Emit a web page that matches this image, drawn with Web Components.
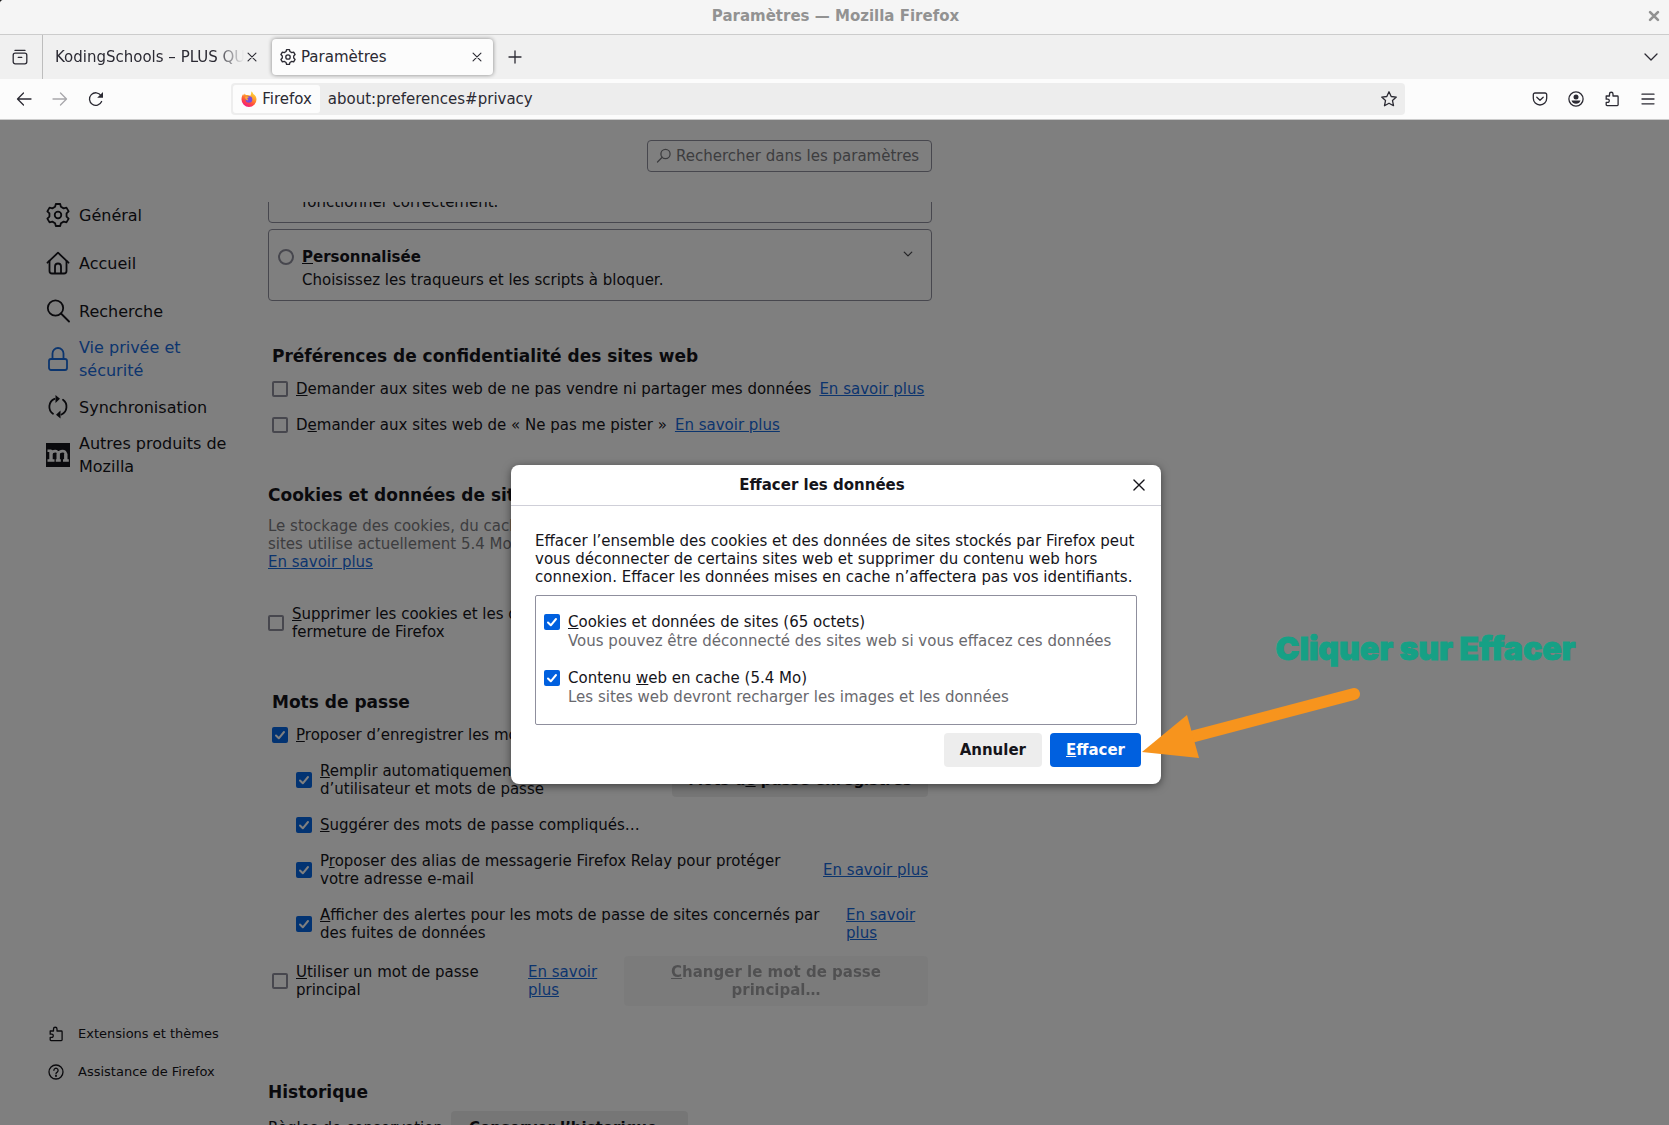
<!DOCTYPE html>
<html lang="fr">
<head>
<meta charset="utf-8">
<title>Paramètres — Mozilla Firefox</title>
<style>
  html, body { margin: 0; height: 100%; }
  html { background: #1c1c1c; }
  body {
    font: 15px/18px "DejaVu Sans", sans-serif;
    color: #15141a;
    overflow: hidden;
  }
</style>
</head>
<body>
<browser-window></browser-window>

<script>
const ICONS = {
  gear: '<path d="M9.800 1h4.400l.7 2.800 2.750 1.600 2.800-.8 2.200 3.800-2.100 2v3.200l2.100 2-2.200 3.800-2.800-.8-2.750 1.600-.7 2.800H9.800l-.7-2.800-2.750-1.600-2.800.8-2.200-3.800 2.100-2v-3.200l-2.100-2 2.200-3.800 2.800.8L9.100 3.800z"/><circle cx="12" cy="12" r="3.300"/>',
  home: '<path d="M1.500 11.700 12 1.700l10.500 10"/><path d="M3.500 10v10a2.500 2.500 0 0 0 2.500 2.500h12a2.500 2.500 0 0 0 2.500-2.500V10"/><path d="M9 22v-6.500a3 3 0 0 1 6 0V22"/>',
  search: '<circle cx="9.500" cy="9" r="7.700"/><path d="m15 14.500 8 8"/>',
  lock: '<rect x="3" y="12" width="18" height="11" rx="2"/><path d="M6.500 12V6.500a5.500 5.500 0 0 1 11 0V12"/>',
  sync: '<path d="M8.500 3.900A8.600 8.600 0 0 0 7 18.800M15.500 19.500A8.600 8.600 0 0 0 17 4.800"/><path d="M9.500 0v8l4.500-4.200zM14.500 23.500v-8L10 19.700z" fill="currentColor" stroke="none"/>',
  puzzle: '<path d="M2.200 5h3.300V3a1.700 1.700 0 0 1 3.500 0v2h4.300a.8.800 0 0 1 .8.800v8a.8.800 0 0 1-.8.800H3a.8.800 0 0 1-.8-.8v-2.400h1.500a1.600 1.600 0 0 0 0-3.200H2.200z"/>',
  help: '<circle cx="8" cy="8" r="7"/><path d="M5.900 6.300a2.100 2.100 0 1 1 3.300 1.800c-.8.500-1.200.9-1.200 1.700"/><circle cx="8" cy="11.900" r=".4"/>',
  overview: '<path d="M3 1.400h10"/><rect x="1.200" y="4.200" width="13.600" height="10.600" rx="2"/><path d="M6.200 8.300h3.600"/>',
  close: '<path d="m3.500 3.500 9 9m0-9-9 9"/>',
  plus: '<path d="M8 2v12M2 8h12"/>',
  down: '<path d="m2 5 6 6 6-6"/>',
  back: '<path d="M15 8H1.700M7.500 2 1.500 8l6 6"/>',
  forward: '<path d="M1 8h13.300M8.500 2l6 6-6 6"/>',
  reload: '<path d="M13.600 10.500A6.300 6.300 0 1 1 13 4.500"/><path d="M15 1v5.800H9.200z" fill="currentColor" stroke="none"/>',
  star: '<path d="m8 .8 2.200 4.700 5.100.6-3.800 3.500 1 5.100L8 12.200l-4.500 2.500 1-5.100L.7 6.100l5.100-.6z"/>',
  pocket: '<path d="M3 2h10a1.700 1.700 0 0 1 1.700 1.700v3.600a6.700 6.700 0 0 1-13.400 0V3.700A1.700 1.700 0 0 1 3 2z"/><path d="m4.800 6.300 3.200 3 3.200-3"/>',
  account: '<circle cx="8" cy="8" r="7.100"/><circle cx="8" cy="5.900" r="2.500" fill="currentColor" stroke="none"/><path d="M3.500 9.500h9A5 5 0 0 1 8 12.800a5 5 0 0 1-4.500-3.300z" fill="currentColor" stroke="none"/>',
  menu: '<path d="M2 3.200h12M2 8h12M2 12.800h12"/>',
  find: '<circle cx="9.500" cy="6" r="4.600"/><path d="M6.200 9.300 1.500 14"/>'
};

const define = (name, html, setup) => {
  const template = document.createElement('template');
  template.innerHTML = html;
  customElements.define(name, class extends HTMLElement {
    constructor() {
      super();
      this.attachShadow({ mode: 'open' }).append(template.content.cloneNode(true));
    }
    connectedCallback() { if (setup) setup(this, this.shadowRoot); }
  });
};

/* Line icon: name, box (its viewBox) */
define('ui-icon', `
  <style>
    :host { display: block; flex: none; width: 16px; height: 16px; }
    svg { display: block; width: 100%; height: 100%; fill: none; stroke: currentColor; stroke-width: var(--stroke, 1.3); stroke-linecap: round; stroke-linejoin: round; }
  </style>
  <svg aria-hidden="true"></svg>`, (host, root) => {
  const box = host.getAttribute('box') || 16;
  const svg = root.querySelector('svg');
  svg.setAttribute('viewBox', '0 0 ' + box + ' ' + box);
  svg.innerHTML = ICONS[host.getAttribute('name')];
});

define('firefox-logo', `
  <style>:host { display: block; flex: none; width: 16px; height: 16px; } svg { display: block; }</style>
  <svg width="16" height="16" viewBox="0 0 16 16" aria-hidden="true">
    <defs>
      <linearGradient id="g" x1="0.8" y1="0" x2="0.3" y2="1">
        <stop offset="0" stop-color="#ffe23d"/><stop offset=".4" stop-color="#ff9a2b"/>
        <stop offset=".7" stop-color="#ff4a3f"/><stop offset="1" stop-color="#f0138a"/>
      </linearGradient>
    </defs>
    <path d="M10.300.3c1 .8 1.700 1.800 2 2.800 1.800 1.100 3.200 3 3.200 5.400A7.500 7.500 0 0 1 .5 8.500c0-2.300.8-4.400 1.700-5.500l.6 1.400 1-1.800.9 1.500c1.800-.3 3.500-.2 4.700.7.700-1.500 1-3 .900-4.500z" fill="url(#g)"/>
    <circle cx="8" cy="8.500" r="3.300" fill="#7a4bd8"/>
    <path d="M4 6c1.500-1 3-.6 4.300.2-1.300.1-1.700.8-2.300 1.400.7.300 1.200 1 .9 1.800C5 9.300 4.200 7.800 4 6z" fill="#ffab33"/>
  </svg>`);

/* Icon-only button */
define('icon-button', `
  <style>
    :host { display: block; flex: none; }
    button { display: grid; place-items: center; width: 36px; height: 32px; padding: 0; border: 0; background: none; color: inherit; }
    :host([small]) button { width: 24px; height: 24px; }
    :host([field]) button { width: 32px; }
    button:disabled { opacity: .4; }
  </style>
  <button type="button"><slot></slot></button>`, (host, root) => {
  const button = root.querySelector('button');
  button.setAttribute('aria-label', host.getAttribute('label'));
  button.disabled = host.hasAttribute('disabled');
});

/* Text button: plain, primary or disabled */
define('ui-button', `
  <style>
    :host { display: block; }
    button {
      display: block; width: 100%; min-height: 34px; padding: 7px 16px;
      border: 0; border-radius: 4px; background: #ededed; color: #15141a;
      font: bold 15px/18px "DejaVu Sans", sans-serif;
    }
    :host([primary]) button { background: #0060df; color: #fbfbfe; }
    button:disabled { opacity: .4; }
  </style>
  <button type="button"><slot></slot></button>`, (host, root) => {
  root.querySelector('button').disabled = host.hasAttribute('disabled');
});

define('more-link', `
  <style>:host { display: inline; } a { color: var(--link); text-decoration: underline; }</style>
  <a href="#aide"><slot>En savoir plus</slot></a>`);

define('check-row', `
  <style>
    :host { display: block; }
    label { display: flex; align-items: center; gap: 8px; }
    .box { display: grid; flex: none; width: 16px; height: 16px; }
    input, svg { grid-area: 1 / 1; }
    input { appearance: none; width: 16px; height: 16px; margin: 0; border: 2px solid #8f8f9d; border-radius: 2px; background: #fff; }
    input:checked { border: 0; background: var(--check, #0060df); }
    svg { display: none; pointer-events: none; }
    input:checked + svg { display: block; }
  </style>
  <label>
    <span class="box"><input type="checkbox"><svg width="16" height="16" viewBox="0 0 16 16" aria-hidden="true"><path d="m4 8.500 2.800 2.800L12 5" fill="none" stroke="#fff" stroke-width="2" stroke-linecap="round" stroke-linejoin="round"/></svg></span>
    <span><slot></slot></span>
  </label>`, (host, root) => {
  root.querySelector('input').checked = host.hasAttribute('checked');
});

define('title-bar', `
  <style>
    :host { display: grid; grid-template-columns: 32px 1fr 30px; align-items: center; height: 34px; padding: 0 0 2px; box-sizing: border-box; background: #f5f5f5; color: #929292; }
    h1 { grid-column: 2; margin: 0; text-align: center; font-size: 15px; line-height: 18px; }
    ui-icon { width: 14px; height: 14px; --stroke: 3; }
    icon-button { justify-self: center; }
  </style>
  <h1>Paramètres — Mozilla Firefox</h1>
  <icon-button small label="Fermer la fenêtre"><ui-icon name="close"></ui-icon></icon-button>`);

define('browser-tab', `
  <style>
    :host { display: flex; align-items: center; box-sizing: border-box; width: 221px; height: 36px; padding: 0 4px 0 8px; border-radius: 4px; }
    :host([active]) { background: #fcfcfc; box-shadow: 0 0 4px rgba(0, 0, 0, .45); }
    .title { flex: 1; min-width: 0; overflow: hidden; white-space: nowrap; }
    :host(:not([active])) .title { mask-image: linear-gradient(to left, transparent, #000 28px); }
    ::slotted(ui-icon) { margin-right: 5px; }
    icon-button ui-icon { width: 14px; height: 14px; }
    icon-button { margin-left: -4px; }
  </style>
  <slot name="icon"></slot>
  <span class="title"><slot></slot></span>
  <icon-button small label="Fermer l’onglet"><ui-icon name="close"></ui-icon></icon-button>`);

define('tab-strip', `
  <style>
    :host { display: flex; align-items: center; height: 44px; border-top: 1px solid #ccc; background: #f0f0f0; color: #2b2a33; }
    .overview { display: flex; align-items: center; align-self: stretch; padding: 0 4px 0 2px; border-right: 1px solid #bdbdbd; }
    .tabs { display: flex; gap: 4px; padding-left: 4px; margin-right: 4px; }
    .fill { flex: 1; }
  </style>
  <div class="overview"><icon-button label="Aperçu des onglets"><ui-icon name="overview"></ui-icon></icon-button></div>
  <div class="tabs">
    <browser-tab>KodingSchools – PLUS QU’UNE ÉCOLE</browser-tab>
    <browser-tab active><ui-icon slot="icon" name="gear" box="24" style="--stroke: 2"></ui-icon>Paramètres</browser-tab>
  </div>
  <icon-button label="Nouvel onglet"><ui-icon name="plus"></ui-icon></icon-button>
  <div class="fill"></div>
  <icon-button label="Lister tous les onglets"><ui-icon name="down"></ui-icon></icon-button>`);

define('nav-toolbar', `
  <style>
    :host { display: flex; align-items: center; height: 40px; padding: 0 3px 0 6px; border-bottom: 1px solid #ccc; background: #fcfcfc; color: #2b2a33; }
    .group { display: flex; }
    .url { flex: 10; display: flex; align-items: center; height: 32px; margin: 0 auto; box-sizing: border-box; padding: 2px 0 2px 2px; border-radius: 4px; background: #ededed; }
    .fill { flex: 1; }
    .identity { display: flex; align-items: center; gap: 5px; height: 28px; padding: 0 8px; border-radius: 3px; background: #fcfcfc; }
    input { flex: 1; min-width: 0; margin: 0; padding: 0 0 0 8px; border: 0; background: none; color: inherit; font: 15px/20px "DejaVu Sans", sans-serif; }
  </style>
  <div class="group">
    <icon-button label="Page précédente"><ui-icon name="back"></ui-icon></icon-button>
    <icon-button label="Page suivante" disabled><ui-icon name="forward"></ui-icon></icon-button>
    <icon-button label="Actualiser"><ui-icon name="reload"></ui-icon></icon-button>
  </div>
  <div class="fill"></div>
  <div class="url">
    <span class="identity"><firefox-logo></firefox-logo><span>Firefox</span></span>
    <input type="text" aria-label="Adresse" value="about:preferences#privacy">
    <icon-button field label="Marquer cette page"><ui-icon name="star"></ui-icon></icon-button>
  </div>
  <div class="fill"></div>
  <div class="group">
    <icon-button label="Pocket"><ui-icon name="pocket"></ui-icon></icon-button>
    <icon-button label="Compte"><ui-icon name="account"></ui-icon></icon-button>
    <icon-button label="Extensions"><ui-icon name="puzzle"></ui-icon></icon-button>
    <icon-button label="Menu"><ui-icon name="menu"></ui-icon></icon-button>
  </div>`);

define('nav-item', `
  <style>
    :host { display: block; }
    a { display: flex; align-items: center; gap: 9px; min-height: 48px; color: inherit; text-decoration: none; font-size: 16px; line-height: 23px; }
    :host([current]) a { color: var(--link); }
    ::slotted(ui-icon) { width: 24px; height: 24px; --stroke: 1.800; }
    :host([minor]) a { gap: 14px; min-height: 38px; font-size: 13px; line-height: 18px; }
    :host([minor]) ::slotted(ui-icon) { width: 16px; height: 16px; --stroke: 1.300; }
  </style>
  <a href="#section"><slot name="icon"></slot><span><slot></slot></span></a>`);

define('mozilla-mark', `
  <style>
    :host { display: grid; place-items: center; flex: none; width: 24px; height: 24px; background: #15141a; }
    svg { display: block; }
  </style>
  <svg width="24" height="24" viewBox="0 0 24 24" fill="none" stroke="#fff" aria-hidden="true">
    <path d="M5 7v11M12.200 10.500V18M19.800 10.500V18" stroke-width="3.400"/>
    <path d="M1.500 7.700h4M5 10.800c1.500-3.400 7.200-4 7.200.5M12.200 10.800c1.500-3.400 7.600-4 7.600.5" stroke-width="2.600"/>
    <path d="M1.500 17.500h7M9.800 17.500h5M17 17.500h5.800" stroke-width="2.400"/>
  </svg>`);

define('prefs-sidebar', `
  <style>
    :host { display: flex; flex-direction: column; justify-content: space-between; box-sizing: border-box; width: 268px; padding: 71px 30px 34px 46px; }
    nav.minor { padding-left: 2px; }
  </style>
  <nav>
    <nav-item><ui-icon slot="icon" name="gear" box="24"></ui-icon>Général</nav-item>
    <nav-item><ui-icon slot="icon" name="home" box="24"></ui-icon>Accueil</nav-item>
    <nav-item><ui-icon slot="icon" name="search" box="24"></ui-icon>Recherche</nav-item>
    <nav-item current><ui-icon slot="icon" name="lock" box="24"></ui-icon>Vie privée et sécurité</nav-item>
    <nav-item><ui-icon slot="icon" name="sync" box="24"></ui-icon>Synchronisation</nav-item>
    <nav-item><mozilla-mark slot="icon"></mozilla-mark>Autres produits de Mozilla</nav-item>
  </nav>
  <nav class="minor">
    <nav-item minor><ui-icon slot="icon" name="puzzle"></ui-icon>Extensions et thèmes</nav-item>
    <nav-item minor><ui-icon slot="icon" name="help"></ui-icon>Assistance de Firefox</nav-item>
  </nav>`);

define('search-field', `
  <style>
    :host { display: block; }
    label { display: flex; align-items: center; gap: 4px; box-sizing: border-box; width: 285px; height: 32px; padding: 0 4px 0 8px; border: 1px solid #8f8f9d; border-radius: 4px; color: var(--muted); }
    input { flex: 1; min-width: 0; margin: 0; padding: 0; border: 0; outline: 0; background: none; color: inherit; font: 15px/18px "DejaVu Sans", sans-serif; }
    input::placeholder { color: var(--muted); opacity: 1; }
  </style>
  <label><ui-icon name="find"></ui-icon><input type="text" aria-label="Rechercher dans les paramètres" placeholder="Rechercher dans les paramètres"></label>`);

define('option-card', `
  <style>
    :host { display: block; border: 1px solid #8f8f9d; border-radius: 4px; padding: 18px 15px 11px 9px; }
    label { display: grid; grid-template-columns: 16px 1fr 16px; column-gap: 8px; row-gap: 5px; align-items: center; }
    input { appearance: none; width: 16px; height: 16px; margin: 0; border: 2px solid #8f8f9d; border-radius: 50%; }
    .title { font-weight: bold; }
    .text { grid-column: 2; }
    ui-icon { width: 10px; height: 12px; align-self: start; justify-self: center; color: #4a4a4f; --stroke: 2; }
  </style>
  <label>
    <input type="radio" name="mode">
    <span class="title"><slot name="title"></slot></span>
    <ui-icon name="down"></ui-icon>
    <span class="text"><slot></slot></span>
  </label>`);

define('prefs-pane', `
  <style>
    :host { display: flex; flex-direction: column; width: 664px; min-height: 0; }
    header { display: flex; justify-content: flex-end; flex: none; padding: 20px 0 30px; }
    .scroll { flex: 1; min-height: 0; overflow: hidden; }
    .cards { display: grid; gap: 6px; margin-top: -51px; }
    h2 { margin: 0; font-size: 17px; line-height: 22px; }
    .inset { padding: 0 4px; }
    section { display: flex; flex-direction: column; }
    .privacy { margin-top: 44px; gap: 18px; }
    .privacy h2 { margin-bottom: -5px; }
    .line { display: flex; align-items: center; gap: 8px; }
    .cookies { margin-top: 50px; }
    .cookies p { width: 420px; margin: 11px 0 34px; color: var(--muted); }
    .cookies p more-link { white-space: nowrap; }
    .cookies check-row { width: 440px; }
    .logins { margin-top: 50px; gap: 18px; }
    .logins h2 { margin-bottom: -5px; }
    .sub { display: flex; flex-direction: column; gap: 18px; padding-left: 24px; }
    .split { display: flex; justify-content: space-between; align-items: center; }
    .fill { width: 346px; }
    .saved { display: flex; width: 256px; height: 36px; align-items: center; }
    .saved ui-button { width: 100%; }
    .relay { width: 490px; }
    .alerts { width: 524px; }
    .narrow { width: 82px; }
    .main { margin-top: -4px; }
    .main check-row { width: 248px; }
    .main .wide { width: 304px; }
    .main .narrow { margin-right: 14px; }
    .main .left { display: flex; align-items: center; }
    .history { margin-top: 75px; gap: 8px; }
    select {
      appearance: none; width: 237px; height: 34px; margin: 0; padding: 0 18px;
      border: 0; border-radius: 4px; background: #ededed; color: #15141a;
      font: bold 15px/18px "DejaVu Sans", sans-serif;
    }
  </style>
  <header><search-field></search-field></header>
  <div class="scroll">
    <div class="cards">
      <option-card><span slot="title">Stricte</span>fonctionner correctement.</option-card>
      <option-card><span slot="title"><u>P</u>ersonnalisée</span>Choisissez les traqueurs et les scripts à bloquer.</option-card>
    </div>
    <section class="privacy inset">
      <h2>Préférences de confidentialité des sites web</h2>
      <div class="line"><check-row><u>D</u>emander aux sites web de ne pas vendre ni partager mes données</check-row><more-link></more-link></div>
      <div class="line"><check-row>D<u>e</u>mander aux sites web de « Ne pas me pister »</check-row><more-link></more-link></div>
    </section>
    <section class="cookies">
      <h2>Cookies et données de sites</h2>
      <p>Le stockage des cookies, du cache et des données de sites utilise actuellement 5.4 Mo d’espace disque. <more-link></more-link></p>
      <check-row><u>S</u>upprimer les cookies et les données des sites à la fermeture de Firefox</check-row>
    </section>
    <section class="logins inset">
      <h2>Mots de passe</h2>
      <check-row checked><u>P</u>roposer d’enregistrer les mots de passe</check-row>
      <div class="sub">
        <div class="split">
          <check-row class="fill" checked><u>R</u>emplir automatiquement les noms d’utilisateur et mots de passe</check-row>
          <div class="saved"><ui-button>Mots d<u>e</u> passe enregistrés</ui-button></div>
        </div>
        <check-row checked><u>S</u>uggérer des mots de passe compliqués…</check-row>
        <div class="split">
          <check-row class="relay" checked>P<u>r</u>oposer des alias de messagerie Firefox Relay pour protéger votre adresse e-mail</check-row>
          <more-link></more-link>
        </div>
        <div class="split">
          <check-row class="alerts" checked><u>A</u>fficher des alertes pour les mots de passe de sites concernés par des fuites de données</check-row>
          <span class="narrow"><more-link></more-link></span>
        </div>
      </div>
      <div class="split main">
        <check-row><u>U</u>tiliser un mot de passe principal</check-row>
        <div class="left"><span class="narrow"><more-link></more-link></span><div class="wide"><ui-button disabled><u>C</u>hanger le mot de passe principal…</ui-button></div></div>
      </div>
    </section>
    <section class="history">
      <h2>Historique</h2>
      <div class="line"><label for="keep">Règles de conservation</label><select id="keep"><option>Conserver l’historique</option></select></div>
    </section>
  </div>`);

define('clear-dialog', `
  <style>
    :host { display: block; width: 650px; border-radius: 8px; background: #fff; box-shadow: 0 2px 8px rgba(0, 0, 0, .5); }
    header { display: grid; grid-template-columns: 12px 1fr 40px; align-items: center; height: 40px; border-bottom: 1px solid #cfcfd8; }
    h2 { grid-column: 2; margin: 0; text-align: center; font-size: 15px; line-height: 18px; }
    .body { padding: 26px 24px 8px; }
    p { margin: 0 0 9px; }
    .options { display: grid; gap: 19px; padding: 17px 8px 18px; border: 1px solid #8f8f9d; border-radius: 2px; }
    .options small { display: block; margin: 1px 0 0 24px; font-size: 15px; color: #69696e; }
    footer { display: flex; justify-content: flex-end; gap: 8px; padding: 0 20px 17px; }
    header ui-icon { width: 18px; height: 18px; --stroke: 1.200; }
  </style>
  <header><h2>Effacer les données</h2><icon-button label="Fermer"><ui-icon name="close"></ui-icon></icon-button></header>
  <div class="body">
    <p>Effacer l’ensemble des cookies et des données de sites stockés par Firefox peut vous déconnecter de certains sites web et supprimer du contenu web hors connexion. Effacer les données mises en cache n’affectera pas vos identifiants.</p>
    <div class="options">
      <div><check-row checked><u>C</u>ookies et données de sites (65 octets)</check-row><small>Vous pouvez être déconnecté des sites web si vous effacez ces données</small></div>
      <div><check-row checked>Contenu <u>w</u>eb en cache (5.4 Mo)</check-row><small>Les sites web devront recharger les images et les données</small></div>
    </div>
  </div>
  <footer><ui-button>Annuler</ui-button><ui-button primary><u>E</u>ffacer</ui-button></footer>`);

/* Callout drawn over the page, anchored to the dialog's primary button */
define('callout-note', `
  <style>
    :host { position: absolute; left: calc(50% + 306px); top: calc(50% + 6px); width: 436px; color: #16a085; }
    strong { display: block; padding-left: 135px; white-space: nowrap; font: 900 32px/40px Inter, sans-serif; -webkit-text-stroke: 1px #16a085; }
    svg { display: block; }
  </style>
  <strong>Cliquer sur Effacer</strong>
  <svg width="230" height="90" viewBox="0 0 230 90" aria-hidden="true">
    <path d="M213 25 46 69" stroke="#f7941d" stroke-width="12" stroke-linecap="round"/>
    <path d="M1 83 46 46l12 43z" fill="#f7941d"/>
  </svg>`);

define('browser-window', `
  <style>
    :host { display: flex; flex-direction: column; height: 100vh; overflow: hidden; border-top-left-radius: 4px; background: #fff; }
    title-bar, tab-strip, nav-toolbar { flex: none; }
    main { position: relative; flex: 1; min-height: 0; display: flex; }
    prefs-sidebar, prefs-pane { --link: #186adc; --muted: #7a7a7e; --check: #0466e4; }
    .shade { position: absolute; inset: 0; display: flex; align-items: center; justify-content: center; padding: 4px 0 0 3px; background: rgba(0, 0, 0, .5); }
  </style>
  <title-bar></title-bar>
  <tab-strip></tab-strip>
  <nav-toolbar></nav-toolbar>
  <main>
    <prefs-sidebar></prefs-sidebar>
    <prefs-pane></prefs-pane>
    <div class="shade"><clear-dialog role="dialog" aria-label="Effacer les données"></clear-dialog></div>
    <callout-note></callout-note>
  </main>`);
</script>
</body>
</html>
